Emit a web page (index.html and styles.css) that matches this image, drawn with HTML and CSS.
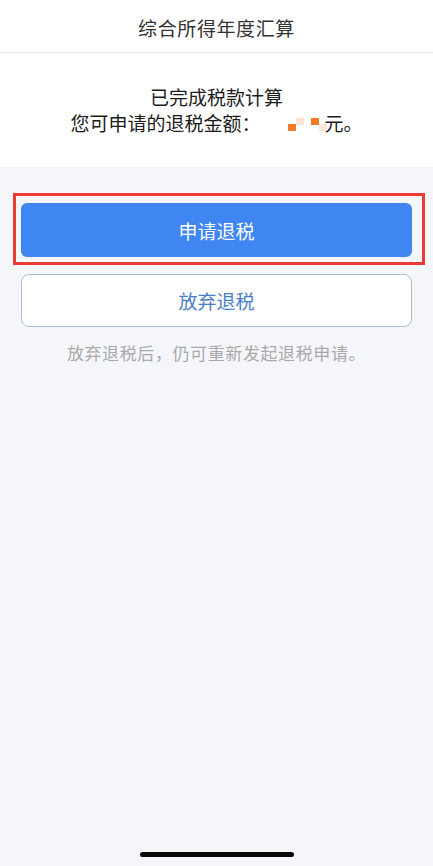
FILE: index.html
```html
<!DOCTYPE html>
<html lang="zh-CN">
<head>
    <meta charset="UTF-8">
    <meta name="viewport" content="width=device-width, initial-scale=1.0">
    <title>综合所得年度汇算</title>
    <link rel="stylesheet" href="styles.css">
</head>
<body>
    <div class="page">
        <header class="nav-bar">
            <h1>综合所得年度汇算</h1>
        </header>

        <!-- Result summary -->
        <section class="result">
            <p>已完成税款计算</p>
            <p>您可申请的退税金额：<span class="amount"><i class="px px-a"></i><i class="px px-b"></i><i class="px px-c"></i><i class="px px-d"></i></span>元。</p>
        </section>

        <!-- Actions -->
        <section class="actions">
            <div class="highlight">
                <button class="btn btn-primary">申请退税</button>
            </div>
            <button class="btn btn-outline">放弃退税</button>
            <p class="hint">放弃退税后，仍可重新发起退税申请。</p>
        </section>

        <div class="home-indicator"></div>
    </div>
</body>
</html>
```

FILE: styles.css
```css
body {
    margin: 0;
    font-family: "Noto Sans CJK SC", "Noto Sans", sans-serif;
    background-color: #f5f6fa;
    color: #222;
}

.page {
    height: 866px;
    display: flex;
    flex-direction: column;
}

.nav-bar {
    background: white;
    height: 48px;
    padding-top: 4px;
    border-bottom: 1px solid #e6e6e6;
}

.nav-bar h1 {
    margin: 0;
    text-align: center;
    font-size: 19px;
    font-weight: 400;
    line-height: 48px;
    color: #333;
    letter-spacing: 0.6px;
}

.result {
    background: white;
    padding: 31px 0 31px;
    text-align: center;
}

.result p {
    margin: 0;
    font-size: 19px;
    line-height: 26px;
    color: #1c1c1c;
}

.amount {
    display: inline-block;
    position: relative;
    width: 64px;
    height: 20px;
    vertical-align: -3px;
}

.px {
    position: absolute;
    width: 8px;
    height: 7px;
}

.px-a { left: 27px; top: 10px; background: #f07a2c; }
.px-b { left: 35px; top: 4px; background: #fbe2d2; }
.px-c { left: 50px; top: 4px; background: #f37b22; }
.px-d { left: 58px; top: 10px; background: #fde6d6; }

.actions {
    padding-top: 26px;
}

.highlight {
    margin: 0 8px 0 13px;
    border: 3px solid #ec3a35;
    padding: 7px 10px 5px 5px;
}

.btn {
    display: block;
    width: 100%;
    height: 54px;
    border-radius: 6px;
    font-family: inherit;
    font-size: 19px;
    cursor: pointer;
}

.btn-primary {
    background: #3f86f2;
    color: white;
    border: none;
}

.btn-outline {
    width: calc(100% - 42px);
    margin: 9px 21px 0;
    height: 53px;
    background: white;
    color: #4a7ec4;
    border: 1px solid #a9bcd4;
    border-radius: 8px;
}

.hint {
    margin: 14px 0 0;
    text-align: center;
    font-size: 17px;
    line-height: 24px;
    letter-spacing: 0.6px;
    color: #a9a9a9;
}

.home-indicator {
    margin: auto auto 9px;
    width: 154px;
    height: 5px;
    border-radius: 3px;
    background: #0a0a0a;
}
```
